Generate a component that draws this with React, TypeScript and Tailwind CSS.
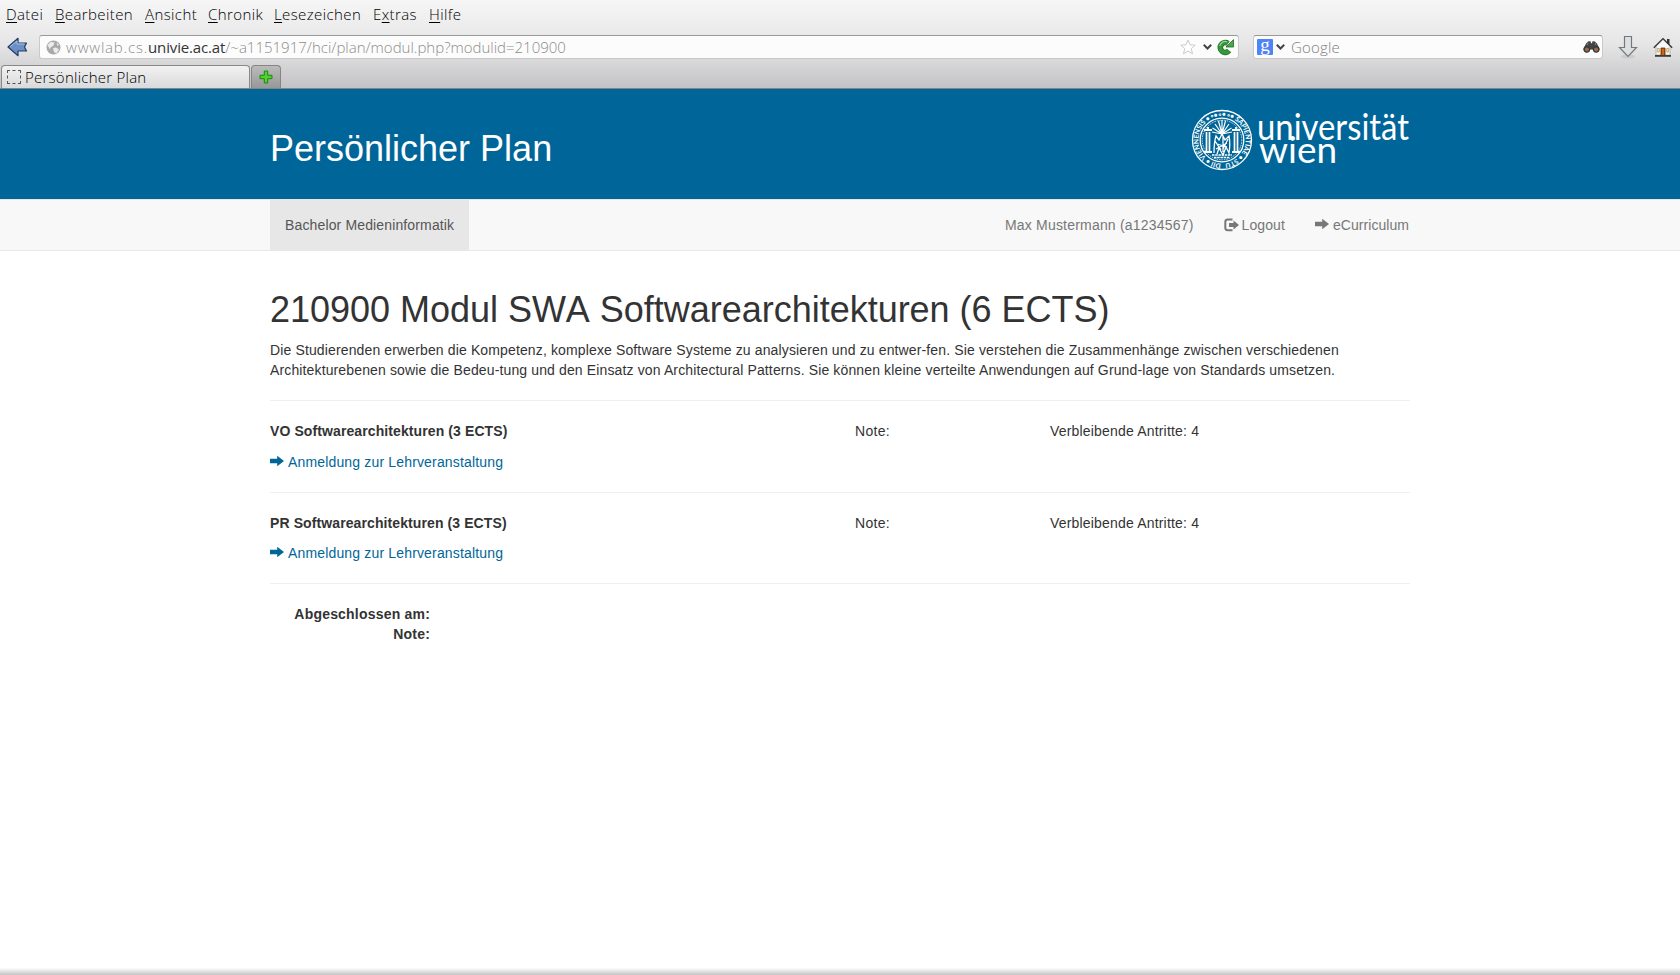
import React from "react";

const menu = [
  { a: "", k: "D", b: "atei", c: "w-[49px]" },
  { a: "", k: "B", b: "earbeiten", c: "w-[90px]" },
  { a: "", k: "A", b: "nsicht", c: "w-[63px]" },
  { a: "", k: "C", b: "hronik", c: "w-[66px]" },
  { a: "", k: "L", b: "esezeichen", c: "w-[99px]" },
  { a: "E", k: "x", b: "tras", c: "w-[56px]" },
  { a: "", k: "H", b: "ilfe", c: "w-[50px]" },
];

function ArrowRight({ className }: { className: string }) {
  return (
    <svg className={className} viewBox="0 0 14 12" fill="currentColor">
      <path d="M0 3.700h7.200V.7L14 6l-6.800 5.300v-3H0z" />
    </svg>
  );
}

function LogoutIcon() {
  return (
    <svg className="mr-[3px] mb-px h-[14px] w-[15px]" viewBox="0 0 15 14">
      <path d="M8.500 1.600H4Q1.300 1.600 1.300 4v5.800q0 2.500 2.700 2.500h4.500" fill="none" stroke="currentColor" strokeWidth="2" />
      <path d="M5 5h4.500V2.400L15 7l-5.500 4.400V9H5z" fill="currentColor" />
    </svg>
  );
}

function Chevron({ className }: { className: string }) {
  return (
    <svg className={className} viewBox="0 0 9 6" fill="none" stroke="#444" strokeWidth="2">
      <path d="M.8 .8l3.700 3.700L8.200 .8" />
    </svg>
  );
}

function Globe() {
  return (
    <svg className="h-[15px] w-[15px]" viewBox="0 0 15 15">
      <circle cx="7.500" cy="7.500" r="7" fill="#a9a9a9" />
      <path d="M1.500 5l3-3 4 .5-1 3-3 2-.5 2zM7 8l3-.5 3 2-2.500 4-2.500-1.500zM10.500 2.500l2.500 2-1.500 1.500z" fill="#ececec" />
    </svg>
  );
}

function Reload() {
  return (
    <svg className="h-[17px] w-[17px]" viewBox="0 0 17 17">
      <path d="M12 11.600A4.900 4.900 0 1 1 11 4.500" fill="none" stroke="#1d6b22" strokeWidth="5.600" />
      <path d="M9 8h7.500V.6z" fill="#4aa84d" stroke="#1d6b22" strokeWidth=".8" />
      <path d="M12 11.600A4.900 4.900 0 1 1 11 4.500" fill="none" stroke="#35983a" strokeWidth="4.200" />
      <path d="M2.800 7A5.500 5.500 0 0 1 10 2.800" fill="none" stroke="#9bd69c" strokeWidth="1.200" />
    </svg>
  );
}

function Binoculars() {
  return (
    <svg className="h-[12px] w-[17px]" viewBox="0 0 17 12">
      <path d="M3 2.500L5.500.3h2l.5 2h1l.5-2h2L14 2.500l2.500 5.500-3 3.500L9.500 8.500h-2l-4 3L.5 8z" fill="#444" />
      <circle cx="3.800" cy="8.300" r="3.400" fill="#3a3a3a" />
      <circle cx="13.200" cy="8.300" r="3.400" fill="#3a3a3a" />
      <circle cx="3.900" cy="8.500" r="2" fill="#9b6a4c" />
      <circle cx="13.100" cy="8.500" r="2" fill="#9b6a4c" />
      <path d="M5 2l-1 2M12 2l1 2" stroke="#999" strokeWidth=".8" />
    </svg>
  );
}

function House() {
  return (
    <svg className="h-5 w-5" viewBox="0 0 20 20">
      <path d="M14 2h2.500v5H14z" fill="#333" />
      <path d="M3 9l7-6.500L17 9v9H3z" fill="#f7f7f7" stroke="#999" strokeWidth=".6" />
      <path d="M.8 10.700L10 1.600l9.200 9.100" fill="none" stroke="#333" strokeWidth="1.300" />
      <path d="M2 18h16v1.800H2z" fill="#3b3b3b" />
      <path d="M8 11h4v7.300H8z" fill="#a8470f" stroke="#693007" strokeWidth=".8" />
      <path d="M9.500 12h1v6h-1z" fill="#e88b1b" />
      <path d="M4.300 11.500h2v3.500h-2zM13.700 11.500h2v3.500h-2z" fill="#f6e9c4" stroke="#c09a5a" strokeWidth=".8" />
    </svg>
  );
}

function UniversityLogo() {
  return (
    <svg className="mt-[11px] h-[82px] w-[220px] overflow-visible" viewBox="1190 100 220 82">
      <defs>
        <path id="ring" d="M1222 163.600A23.600 23.600 0 1 1 1222.100 163.600" />
      </defs>
      <g transform="translate(1222 140)" fill="none" stroke="#fff">
        <circle r="29.500" strokeWidth="1.300" />
        <circle r="21.800" strokeWidth="1.300" />
        <circle r="19.800" strokeWidth="1" strokeDasharray="1.500 1" opacity=".8" />
        <path d="M-15.500-8v19M-12.500-8v19M12.500-8v19M15.500-8v19" strokeWidth="1.700" />
        <path d="M-18-10h8M10-10h8M-18 12h8M10 12h8M-14-10v-3M14-10v-3" strokeWidth="1.800" />
        <path d="M0-6l-7-10M0-6l-3.500-13M0-6v-14M0-6l3.500-13M0-6l7-10M0-6l-9.500-6M0-6l9.500-6M0-6l-10-2M0-6l10-2" strokeWidth="1.200" />
        <path d="M-8 13c0-8 1-14 2-17l3 4 3-6 3 6 4-4c1 5 1 11 0 17l-3-6-3 8-4-7-2 6M-5 4l10 3M-6 9l11-6M1-4v16M-7 1l6 9M6-1l-5 10" strokeWidth="1.300" />
        <path d="M-10 15h20M-8 17.500H8" strokeWidth="1.400" strokeDasharray="2.500 .7" />
      </g>
      <text className="font-['Lato',sans-serif] text-[7px] font-bold" fill="#fff">
        <textPath href="#ring" startOffset="1" textLength="144" lengthAdjust="spacingAndGlyphs">DII • VIENNENSIS •∘•∘•∘• SAPIENTIAE • STU</textPath>
      </text>
      <text x="1257" y="140" textLength="152" lengthAdjust="spacingAndGlyphs" className="font-['Lato',sans-serif] text-[37px]" fill="#fff">universität</text>
      <text x="1259" y="163" textLength="78" lengthAdjust="spacingAndGlyphs" className="font-['Lato',sans-serif] text-[36px]" fill="#fff">wien</text>
    </svg>
  );
}

function Course({ title, h, gap }: { title: string; h: string; gap: string }) {
  return (
    <section className={`border-b border-[#eee] pt-5 ${h}`}>
      <div className="flex h-5">
        <h2 className="w-[585px] font-bold tracking-[0.1px]">{title}</h2>
        <p className="w-[195px] tracking-[0.3px]">Note:</p>
        <p className="tracking-[0.18px]">Verbleibende Antritte: 4</p>
      </div>
      <a className={`flex h-5 items-center text-[#006699] ${gap}`}>
        <ArrowRight className="mr-[4px] mb-[3px] h-3 w-[14px]" />
        <span className="tracking-[0.16px]">Anmeldung zur Lehrveranstaltung</span>
      </a>
    </section>
  );
}

function Browser() {
  return (
    <div className="flex h-[89px] shrink-0 flex-col border-b border-[#858585] bg-gradient-to-b from-[#f6f6f6] via-[#e6e6e7] to-[#c3c3c5] font-['Open_Sans',sans-serif] font-light text-black">
      <nav className="flex h-[29px] items-center pb-[2px] pl-[6px] text-[15px] tracking-[0.4px]">
        {menu.map((m) => (
          <span key={m.k} className={m.c}>
            {m.a}
            <span className="underline decoration-1 underline-offset-[2px]">{m.k}</span>
            {m.b}
          </span>
        ))}
      </nav>
      <div className="flex h-[36px] items-center pl-[7px]">
        <svg className="mr-[11px] h-5 w-[21px]" viewBox="0 0 21 20">
          <path d="M1 10l10-8.700V6h8.500l-2 4 2 4H11v4.700z" fill="#6c90c5" stroke="#223c68" strokeWidth="1.200" strokeLinejoin="round" />
          <path d="M3 9.700L10 4v3h7.500" fill="none" stroke="#a9c2e6" />
        </svg>
        <div className="flex h-6 w-[1200px] items-center rounded-[3px] border border-[#c9c9c9] border-t-[#999] bg-[#fcfcfc] pr-1 pl-[6px]">
          <Globe />
          <span className="ml-[5px] flex-1 pb-px text-[15px] text-[#8c8c8c]">
            <span className="tracking-[0.8px]">wwwlab.cs.</span>
            <span className="font-normal tracking-[-0.15px] text-[#333]">univie.ac.at</span>
            /~a1151917/hci/plan/modul.php?modulid=210900
          </span>
          <svg className="mr-[7px] h-4 w-4" viewBox="0 0 16 16">
            <path d="M8 1l2 4.800 5.200.4-4 3.400 1.300 5.200L8 12l-4.500 2.800 1.300-5.200-4-3.400L6 5.800z" fill="#fff" stroke="#ccc" />
          </svg>
          <Chevron className="mr-[5px] h-[6px] w-[9px]" />
          <Reload />
        </div>
        <div className="ml-[14px] flex h-6 w-[350px] items-center rounded-[3px] border border-[#c9c9c9] border-t-[#999] bg-[#fcfcfc] pr-[2px] pl-[3px]">
          <span className="flex h-4 w-4 items-center justify-center rounded-[1px] bg-[#4f84f7] pb-[4px] font-['Liberation_Serif',serif] text-[19px] leading-4 font-normal text-white">g</span>
          <Chevron className="mr-[6px] ml-[3px] h-[6px] w-[9px]" />
          <span className="flex-1 pb-px text-[15px] tracking-[0.2px] text-[#808080]">Google</span>
          <Binoculars />
        </div>
        <svg className="ml-[15px] h-6 w-5" viewBox="0 0 20 24">
          <ellipse cx="10" cy="21.500" rx="7" ry="2" fill="#ccc" />
          <path d="M6.500 1.500h7v11h5L10 21.500 1.500 12.500h5z" fill="#dce0e2" stroke="#777" strokeWidth="1.200" />
        </svg>
        <span className="ml-[15px]">
          <House />
        </span>
      </div>
      <div className="flex h-[23px] items-end pl-px">
        <div className="flex h-[23px] w-[249px] items-center rounded-t-[4px] border border-b-0 border-[#888] bg-gradient-to-b from-[#f2f2f2] to-[#dadadb] pl-[5px] text-[15px]">
          <span className="mr-[4px] h-[14px] w-[14px] rounded-[1px] border border-dashed border-[#555]" />
          <span className="tracking-[0.25px]">Persönlicher Plan</span>
        </div>
        <div className="ml-px flex h-[23px] w-[30px] items-center justify-center rounded-t-[4px] border border-b-0 border-[#858585] bg-gradient-to-b from-[#bbb] to-[#989898]">
          <svg className="h-[14px] w-[14px]" viewBox="0 0 14 14">
            <path d="M5.300 1h3.400v4.300H13v3.400H8.700V13H5.300V8.700H1V5.300h4.300z" fill="#4fd32f" stroke="#188a0c" strokeLinejoin="round" />
          </svg>
        </div>
      </div>
    </div>
  );
}

export default function App() {
  return (
    <div className="flex h-[975px] w-[1680px] flex-col overflow-hidden bg-white font-['Liberation_Sans',Arial,sans-serif] text-[14px] leading-5 text-[#333]">
      <Browser />
      <header className="h-[110px] shrink-0 bg-[#006699] text-white">
        <div className="mx-auto flex w-[1140px] justify-between">
          <h1 className="pt-[40px] text-[36px] leading-10">Persönlicher Plan</h1>
          <UniversityLogo />
        </div>
      </header>
      <nav className="h-[52px] shrink-0 border-y border-[#e7e7e7] bg-[#f8f8f8] text-[#777]">
        <div className="mx-auto flex h-[50px] w-[1140px] items-center">
          <a className="flex h-[50px] w-[199px] items-center bg-[#e7e7e7] pl-[15px] tracking-[0.14px] text-[#555]">Bachelor Medieninformatik</a>
          <span className="ml-auto tracking-[0.2px]">Max Mustermann (a1234567)</span>
          <a className="ml-[30px] flex items-center tracking-[0.1px]">
            <LogoutIcon />
            Logout
          </a>
          <a className="mr-px ml-[30px] flex items-center tracking-[0.05px]">
            <ArrowRight className="mr-[4px] mb-[3px] h-3 w-[14px]" />
            eCurriculum
          </a>
        </div>
      </nav>
      <main className="mx-auto w-[1140px] flex-1 pt-[39px]">
        <h1 className="text-[36px] leading-10 tracking-[-0.02px] [font-kerning:none]">210900 Modul SWA Softwarearchitekturen (6 ECTS)</h1>
        <p className="mt-[10px] h-[61px] border-b border-[#eee] tracking-[0.133px] whitespace-nowrap">
          Die Studierenden erwerben die Kompetenz, komplexe Software Systeme zu analysieren und zu entwer-fen. Sie verstehen die Zusammenhänge zwischen verschiedenen
          <br />
          Architekturebenen sowie die Bedeu-tung und den Einsatz von Architectural Patterns. Sie können kleine verteilte Anwendungen auf Grund-lage von Standards umsetzen.
        </p>
        <Course title="VO Softwarearchitekturen (3 ECTS)" h="h-[92px]" gap="mt-[11px]" />
        <Course title="PR Softwarearchitekturen (3 ECTS)" h="h-[91px]" gap="mt-[10px]" />
        <div className="w-[160px] pt-5 text-right font-bold tracking-[0.2px]">
          <p>Abgeschlossen am:</p>
          <p>Note:</p>
        </div>
      </main>
      <div className="h-[7px] shrink-0 bg-gradient-to-b from-white to-[#c4c4c4]" />
    </div>
  );
}
